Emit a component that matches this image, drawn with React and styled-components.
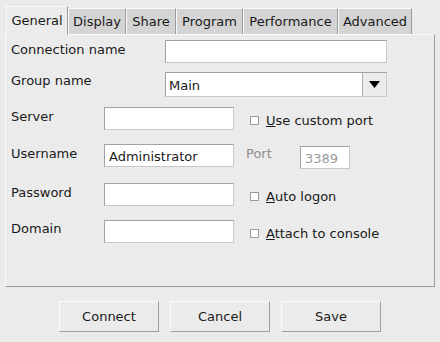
import { styled, createGlobalStyle } from "styled-components";

const Global = createGlobalStyle`
  html, body {
    margin: 0;
    background: #ebebeb;
    font-family: "DejaVu Sans", "Liberation Sans", sans-serif;
    font-size: 13px;
    color: #1a1a1a;
  }
`;
const Window = styled.div`
  width: 440px;
  height: 342px;
  box-sizing: border-box;
  padding: 5px 5px 0 5px;
  background: #ebebeb;
`;
const TabBar = styled.div`
  display: flex;
  align-items: flex-end;
  padding-left: 1px;
  height: 29px;
`;
const Tab = styled.div`
  box-sizing: border-box;
  width: ${(p) => p.$w}px;
  height: ${(p) => (p.$active ? 29 : 26)}px;
  display: flex;
  align-items: center;
  justify-content: center;
  background: ${(p) => (p.$active ? "#ebebeb" : "#d4d4d4")};
  border-top: 1px solid #fafafa;
  border-left: 1px solid #fafafa;
  border-right: 1px solid #9c9c9c;
  margin-bottom: ${(p) => (p.$active ? -1 : 0)}px;
  position: relative;
  z-index: ${(p) => (p.$active ? 1 : 0)};
  padding-bottom: ${(p) => (p.$active ? 2 : 0)}px;
`;
const Panel = styled.div`
  box-sizing: border-box;
  width: 430px;
  height: 253px;
  border-top: 1px solid #fafafa;
  border-left: 1px solid #fafafa;
  border-right: 1px solid #9c9c9c;
  border-bottom: 1px solid #9c9c9c;
  padding: 5px 0 0 5px;
  display: flex;
  flex-direction: column;
`;
const Row = styled.div`
  display: flex;
  align-items: flex-start;
  margin-top: ${(p) => p.$mt || 0}px;
`;
const Label = styled.div`
  width: ${(p) => p.$w}px;
  flex-shrink: 0;
  padding-top: ${(p) => p.$pt ?? 2}px;
  color: ${(p) => (p.$dim ? "#8c8c8c" : "#1a1a1a")};
`;
const Input = styled.div`
  box-sizing: border-box;
  width: ${(p) => p.$w}px;
  height: ${(p) => p.$h || 23}px;
  background: #ffffff;
  border: 1px solid #a2a2a2;
  border-right-color: #c8c8c8;
  border-bottom-color: #c8c8c8;
  padding: 2px 4px 0;
  display: flex;
  align-items: center;
  color: ${(p) => (p.$dim ? "#9a9a9a" : "#1a1a1a")};
  margin-top: ${(p) => p.$mt || 0}px;
`;
const Select = styled.div`
  box-sizing: border-box;
  width: 222px;
  height: 25px;
  display: flex;
  background: #ffffff;
  border: 1px solid #a2a2a2;
  border-right-color: #c8c8c8;
  border-bottom-color: #c8c8c8;
`;
const SelectText = styled.div`
  flex: 1;
  display: flex;
  align-items: center;
  padding: 2px 3px 0;
`;
const DropButton = styled.div`
  width: 23px;
  display: flex;
  align-items: center;
  justify-content: center;
  background: #ebebeb;
  border-left: 1px solid #b0b0b0;
`;
const Check = styled.div`
  display: flex;
  align-items: center;
  gap: 7px;
  margin-left: 16px;
  padding-top: 6px;
`;
const Box = styled.span`
  box-sizing: border-box;
  width: 9px;
  height: 9px;
  background: #fff;
  border: 1px solid #9a9a9a;
`;
const U = styled.span`
  text-decoration: underline;
`;
const Port = styled.div`
  display: flex;
  align-items: flex-start;
  margin-left: 12px;
`;
const Buttons = styled.div`
  display: flex;
  justify-content: center;
  gap: 11px;
  margin-top: 14px;
`;
const Button = styled.div`
  box-sizing: border-box;
  width: 100px;
  height: 31px;
  display: flex;
  align-items: center;
  justify-content: center;
  background: #ebebeb;
  border-top: 1px solid #fbfbfb;
  border-left: 1px solid #fbfbfb;
  border-right: 1px solid #a0a0a0;
  border-bottom: 1px solid #a0a0a0;
`;

const tabs = [
  ["General", 62],
  ["Display", 58],
  ["Share", 50],
  ["Program", 67],
  ["Performance", 95],
  ["Advanced", 74],
];

function CheckItem({ first, rest }) {
  return (
    <Check>
      <Box />
      <span>
        <U>{first}</U>
        {rest}
      </span>
    </Check>
  );
}

export default function App() {
  return (
    <Window>
      <Global />
      <TabBar>
        {tabs.map(([t, w], i) => (
          <Tab key={t} $w={w} $active={i === 0}>
            {t}
          </Tab>
        ))}
      </TabBar>
      <Panel>
        <Row>
          <Label $w={154}>Connection name</Label>
          <Input $w={222} $h={23} />
        </Row>
        <Row $mt={9}>
          <Label $w={154} $pt={1}>Group name</Label>
          <Select>
            <SelectText>Main</SelectText>
            <DropButton>
              <svg width="11" height="7" viewBox="0 0 11 7">
                <path d="M0 0 H11 L5.5 7 Z" fill="#000" />
              </svg>
            </DropButton>
          </Select>
        </Row>
        <Row $mt={10}>
          <Label $w={93}>Server</Label>
          <Input $w={130} />
          <CheckItem first="U" rest="se custom port" />
        </Row>
        <Row $mt={14}>
          <Label $w={93}>Username</Label>
          <Input $w={130}>Administrator</Input>
          <Port>
            <Label $w={54} $dim>
              Port
            </Label>
            <Input $w={50} $mt={2} $dim>
              3389
            </Input>
          </Port>
        </Row>
        <Row $mt={14}>
          <Label $w={93}>Password</Label>
          <Input $w={130} />
          <CheckItem first="A" rest="uto logon" />
        </Row>
        <Row $mt={14}>
          <Label $w={93} $pt={1}>Domain</Label>
          <Input $w={130} />
          <CheckItem first="A" rest="ttach to console" />
        </Row>
      </Panel>
      <Buttons>
        <Button>Connect</Button>
        <Button>Cancel</Button>
        <Button>Save</Button>
      </Buttons>
    </Window>
  );
}
